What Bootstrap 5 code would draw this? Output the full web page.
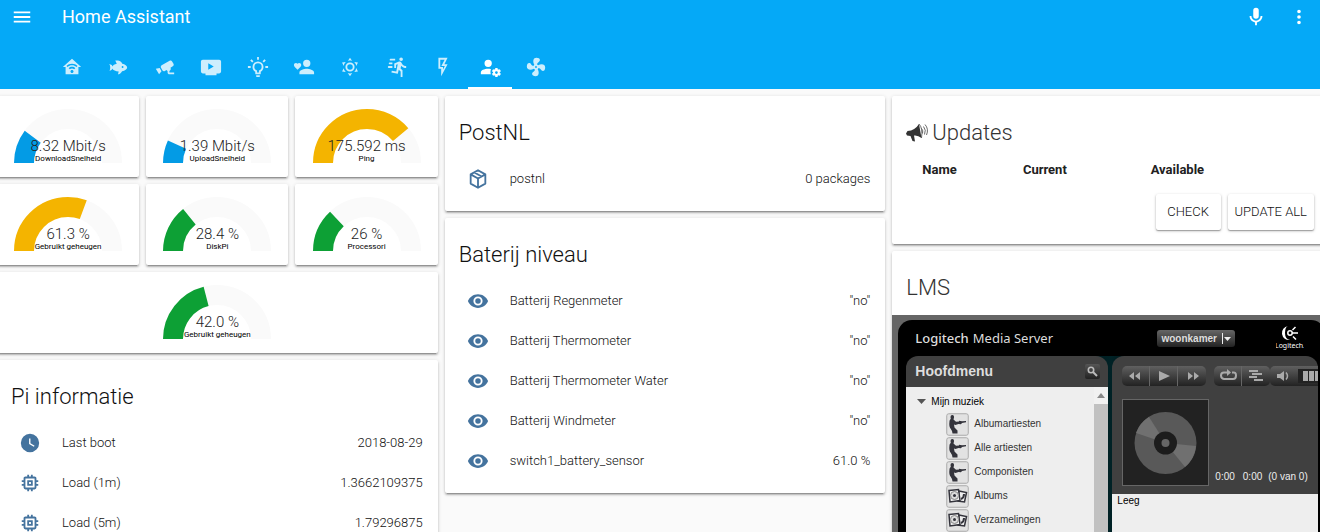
<!DOCTYPE html>
<html lang="nl">
<head>
<meta charset="utf-8">
<meta name="viewport" content="width=device-width, initial-scale=1">
<title>Home Assistant</title>
<link rel="stylesheet" href="https://cdn.jsdelivr.net/npm/bootstrap@5.3.0/dist/css/bootstrap.min.css">
<style>
  body { font-family: Roboto, "Noto Sans", sans-serif; font-size: 13px; line-height: 18px; font-weight: 300; color: #111; background: #fafafa; overflow: hidden; }
  svg { display: block; fill: currentColor; flex: none; }
  .ico { width: 22px; height: 22px; }
  .app-header { background: #05a9f7; color: #fff; }
  .toolbar { height: 34px; padding: 0 10px 0 11px; }
  .app-title { font-size: 18px; line-height: 24px; font-weight: 400; margin-left: 29px; }
  .icon-btn { background: none; border: 0; padding: 0; color: inherit; }
  .icon-btn + .icon-btn { margin-left: 21px; }
  .tabs { display: grid; grid-template-columns: repeat(11, 1fr); column-gap: 3px; width: 508px; margin: 11px 0 0 50px; }
  .tabs a { height: 44px; color: #cdeefd; display: flex; justify-content: center; align-items: center; padding-top: 2px; border-bottom: 2px solid transparent; }
  .tabs a.active { color: #fff; border-color: #fff; }
  .board { display: grid; grid-template-columns: repeat(3, minmax(0, 1fr)); gap: 7px; margin: 7px -13px 0 -3px; }
  .tile { background: #fff; border-radius: 2px; box-shadow: 0 2px 2px rgba(0,0,0,.2), 0 1px 4px rgba(0,0,0,.14), 0 3px 1px -2px rgba(0,0,0,.2); }
  .stack { display: flex; flex-direction: column; gap: 7px; }
  .gauges { display: grid; grid-template-columns: repeat(3, 1fr); gap: 7px; }
  .gauge { position: relative; padding: 13px 0 14px; }
  .gauge svg { margin: 0 auto; width: 108px; height: 54px; }
  .gauge path { fill: none; stroke-width: 20; }
  .gauge-text { position: absolute; left: 0; right: 0; top: 42px; text-align: center; }
  .gauge-value { font-size: 15px; line-height: 17px; color: #222; }
  .gauge-name { font-size: 8px; line-height: 8px; font-weight: 400; color: #000; }
  .tile-title { font-size: 22px; line-height: 29px; font-weight: 300; margin: 0; padding: 22px 14px 0; }
  .tile-title.soft { color: #333; }
  .rows { display: grid; gap: 4px; padding: 14px 15px; margin: 0; list-style: none; }
  .rows li { display: flex; align-items: center; height: 36px; }
  .rows .ico { margin: 0 21px 0 7px; color: #44739e; }
  .updates { margin-top: 14px; }
  .updates th { font-weight: 700; padding: 0 0 0 16px; color: #212121; }
  .updates th:first-child { padding-left: 30px; }
  .upd-actions { gap: 7px; padding: 15px 19px 14px; }
  .mdc { background: #fff; border: 0; height: 36px; border-radius: 2px; padding: 0 7px; color: #111; font-size: 13px; font-weight: 300; min-width: 65px; box-shadow: 0 1px 3px rgba(0,0,0,.25), 0 1px 1px rgba(0,0,0,.25); }

  .lms-frame { background: #666; padding: 5px 8px 0 6px; margin-top: 13px; height: 260px; font-family: "Liberation Sans", Arial, sans-serif; font-size: 10px; font-weight: 400; }
  .lms { background: linear-gradient(90deg, #000 30%, #002226 50%, #000 60%) 0 36px no-repeat #000; border-radius: 14px 14px 0 0; height: 100%; padding: 0 7px 0 8px; display: flex; flex-direction: column; }
  .lms-top { height: 36px; color: #ddd; padding: 0 14px 0 9px; }
  .lms-brand { font-family: "Noto Sans", sans-serif; font-size: 13px; font-weight: 500; }
  .lms-sub { font-family: "Noto Sans", sans-serif; font-size: 13px; }
  .player-pick { height: 17px; padding: 0; border: 0; color: #ddd; font-weight: 700; font-size: 10px; line-height: 15px; border-radius: 3px; background: linear-gradient(#666, #222); }
  .player-pick svg { width: 14px; height: 15px; }
  .logi { width: 28px; height: 24px; margin-left: 41px; color: #fff; }
  .lms-body { flex: 1; display: grid; grid-template-columns: 202px 1fr; gap: 4px; }
  .pane { border-radius: 12px 12px 0 0; background: #404040; overflow: hidden; display: flex; flex-direction: column; min-width: 0; }
  .pane-head { height: 31px; padding: 0 8px 0 9px; }
  .pane-head h2 { font-size: 14px; font-weight: 700; margin: 0; color: #ddd; }
  .search-btn { width: 15px; height: 15px; border: 0; padding: 2px; background: linear-gradient(#555, #222); color: #bbb; border-radius: 2px; }
  .tree { background: #eee; flex: 1; display: flex; color: #222; }
  .tree ul { list-style: none; margin: 0; padding: 0 0 0 40px; }
  .tree li { height: 24px; display: flex; align-items: center; gap: 5px; color: #333; }
  .tree li svg { width: 23px; height: 23px; }
  .tree-root { height: 25px; padding: 4px 0 0 11px; color: #000; gap: 5px; }
  .tree-root svg { color: #555; }
  .bar { width: 14px; background: #c1c1c1; }
  .bar div { height: 17px; background: #f1f1f1; padding: 6px 3px; color: #888; }
  .controls { margin: 10px 0 0 10px; height: 20px; }
  .ctl { display: flex; flex: none; border-radius: 5px; overflow: hidden; background: linear-gradient(#606060, #222); color: #aaa; }
  .ctl button { border: 0; border-right: 1px solid #666; padding: 0; background: none; color: inherit; width: 28px; height: 20px; }
  .ctl button:last-of-type { border-right: 0; }
  .ctl svg { width: 28px; height: 20px; }
  .now { padding: 13px 0 8px 10px; color: #eee; }
  .now .time { margin-left: 6px; }
  .cover { width: 87px; height: 87px; }
  .queue { background: #eee; color: #000; flex: 1; padding: 0 5px; line-height: 13px; }
</style>
</head>
<body>
<svg width="0" height="0" class="position-absolute" aria-hidden="true">
  <symbol id="eye" viewBox="0 0 24 24"><path d="M12,9A3,3 0 0,0 9,12A3,3 0 0,0 12,15A3,3 0 0,0 15,12A3,3 0 0,0 12,9M12,17A5,5 0 0,1 7,12A5,5 0 0,1 12,7A5,5 0 0,1 17,12A5,5 0 0,1 12,17M12,4.5C7,4.5 2.73,7.61 1,12C2.73,16.39 7,19.5 12,19.5C17,19.5 21.27,16.39 23,12C21.27,7.61 17,4.5 12,4.5Z"/></symbol>
  <symbol id="chip" viewBox="0 0 24 24"><path d="M17,17H7V7H17M21,11V9H19V7C19,5.89 18.1,5 17,5H15V3H13V5H11V3H9V5H7C5.89,5 5,5.89 5,7V9H3V11H5V13H3V15H5V17A2,2 0 0,0 7,19H9V21H11V19H13V21H15V19H17A2,2 0 0,0 19,17V15H21V13H19V11M13,13H11V11H13M15,9H9V15H15V9Z"/></symbol>
  <symbol id="artist" viewBox="0 0 23 23"><rect x=".75" y=".75" width="21.5" height="21.5" rx="2" fill="#e2e2e2" stroke="#aaa"/><path fill="#33333b" d="M4.500 4Q4.500 1.800 6.500 2Q8.500 2.300 8 4.500L7.500 6.500L10 8.800L13 8.500V7.700L16 8.300L20 8V9.300L16 10L15 11.200L12.500 11L9.500 12L8 11.500L8.500 14.500L11.500 17.500V20.500H6.500Q6.500 18 4.500 15.500Q2.800 13.500 3.500 8Q3.700 6.500 4.800 6Z"/></symbol>
  <symbol id="album" viewBox="0 0 23 23"><rect x=".75" y=".75" width="21.500" height="21.500" rx="2" fill="#e2e2e2" stroke="#aaa"/><g stroke="#33333b" fill="#eee"><path stroke-width="1.500" d="M13 6L20.500 7.500L18.500 17L12 16Z"/><path stroke-width="1.500" d="M3 5.500L12.500 4.500L14 15.500L4 17Z"/><circle cx="8.500" cy="10.500" r="4" fill="#ddd" stroke="#888"/></g><circle cx="8.500" cy="10.500" r="1.500" fill="#33333b"/><path d="M15 14q3-1 3-5" stroke="#33333b" stroke-width="2" fill="none"/></symbol>
</svg>

<header class="app-header">
  <div class="toolbar d-flex align-items-center">
    <button class="icon-btn" aria-label="Menu"><svg class="ico" viewBox="0 0 24 24"><path d="M3,6H21V8H3V6M3,11H21V13H3V11M3,16H21V18H3V16Z"/></svg></button>
    <h1 class="app-title mb-0">Home Assistant</h1>
    <button class="icon-btn ms-auto" aria-label="Spraak"><svg class="ico" viewBox="0 0 24 24"><path d="M12,2A3,3 0 0,1 15,5V11A3,3 0 0,1 12,14A3,3 0 0,1 9,11V5A3,3 0 0,1 12,2M19,11C19,14.53 16.39,17.44 13,17.93V21H11V17.93C7.61,17.44 5,14.53 5,11H7A5,5 0 0,0 12,16A5,5 0 0,0 17,11H19Z"/></svg></button>
    <button class="icon-btn" aria-label="Meer"><svg class="ico" viewBox="0 0 24 24"><path d="M12,16A2,2 0 0,1 14,18A2,2 0 0,1 12,20A2,2 0 0,1 10,18A2,2 0 0,1 12,16M12,10A2,2 0 0,1 14,12A2,2 0 0,1 12,14A2,2 0 0,1 10,12A2,2 0 0,1 12,10M12,4A2,2 0 0,1 14,6A2,2 0 0,1 12,8A2,2 0 0,1 10,6A2,2 0 0,1 12,4Z"/></svg></button>
  </div>
  <nav class="tabs">
    <a href="#" aria-label="Huis"><svg class="ico" viewBox="0 0 24 24"><path d="M12,3L2,12H5V20H19V12H22L12,3M12,8.5C14.34,8.5 16.46,9.43 18,10.94L16.8,12.12C15.58,10.91 13.88,10.17 12,10.17C10.12,10.17 8.42,10.91 7.2,12.12L6,10.94C7.54,9.43 9.66,8.5 12,8.5M12,11.83C13.4,11.83 14.67,12.39 15.6,13.3L14.4,14.47C13.79,13.87 12.94,13.5 12,13.5C11.06,13.5 10.21,13.87 9.6,14.47L8.4,13.3C9.33,12.39 10.6,11.83 12,11.83M12,15.17C12.94,15.17 13.7,15.91 13.7,16.83C13.7,17.75 12.94,18.5 12,18.5C11.06,18.5 10.3,17.75 10.3,16.83C10.3,15.91 11.06,15.17 12,15.17Z"/></svg></a>
    <a href="#" aria-label="Vis"><svg class="ico" viewBox="0 0 24 24"><path d="M12,20L12.76,17C9.5,16.79 6.59,15.4 5.75,13.58C5.66,14.06 5.53,14.5 5.33,14.83C4.67,16 3.33,16 2,16C3.1,16 3.5,14.43 3.5,12.5C3.5,10.57 3.1,9 2,9C3.33,9 4.67,9 5.33,10.17C5.53,10.5 5.66,10.94 5.75,11.42C6.4,10 8.32,8.85 10.66,8.32L9,5C11,5 13,5 14.33,5.67C15.46,6.23 16.11,7.27 16.69,8.38C19.61,9.08 22,10.66 22,12.5C22,14.38 19.5,16 16.5,16.66C15.67,17.76 14.86,18.78 14.17,19.33C13.33,20 12.67,20 12,20M17,11A1,1 0 0,0 16,12A1,1 0 0,0 17,13A1,1 0 0,0 18,12A1,1 0 0,0 17,11Z"/></svg></a>
    <a href="#" aria-label="Camera"><svg class="ico" viewBox="0 0 24 24"><path d="M18.15,4.94C17.77,4.91 17.37,5 17,5.2L8.35,10.2C7.39,10.76 7.07,12 7.62,12.94L9.12,15.53C9.67,16.5 10.89,16.82 11.85,16.27L13.65,15.23C13.92,15.69 14.32,16.06 14.81,16.27V18.04C14.81,19.13 15.7,20 16.81,20H22V18.04H16.81V16.27C17.72,15.87 18.31,14.97 18.31,14C18.31,13.54 18.19,13.11 17.97,12.73L20.5,11.27C21.47,10.71 21.8,9.5 21.24,8.53L19.74,5.94C19.4,5.34 18.79,5 18.15,4.94M6.22,13.17L2,13.87L2.75,15.17L4.75,18.63L5.5,19.93L8.22,16.63L6.22,13.17Z"/></svg></a>
    <a href="#" aria-label="Media"><svg class="ico" viewBox="0 0 24 24"><path d="M3,4H21A2,2 0 0,1 23,6V17A2,2 0 0,1 21,19H18V21H6V19H3A2,2 0 0,1 1,17V6A2,2 0 0,1 3,4M9,8V15L15,11.5Z"/></svg></a>
    <a href="#" aria-label="Licht"><svg class="ico" viewBox="0 0 24 24"><path d="M20,11H23V13H20V11M1,11H4V13H1V11M13,1V4H11V1H13M4.92,3.5L7.05,5.64L5.63,7.05L3.5,4.93L4.92,3.5M16.95,5.63L19.07,3.5L20.5,4.93L18.37,7.05L16.95,5.63M12,6A6,6 0 0,1 18,12C18,14.22 16.79,16.16 15,17.2V19A1,1 0 0,1 14,20H10A1,1 0 0,1 9,19V17.2C7.21,16.16 6,14.22 6,12A6,6 0 0,1 12,6M14,21V22A1,1 0 0,1 13,23H11A1,1 0 0,1 10,22V21H14M11,18H13V15.87C14.73,15.43 16,13.86 16,12A4,4 0 0,0 12,8A4,4 0 0,0 8,12C8,13.86 9.27,15.43 11,15.87V18Z"/></svg></a>
    <a href="#" aria-label="Personen"><svg class="ico" viewBox="0 0 24 24"><path d="M15,14C12.3,14 7,15.3 7,18V20H23V18C23,15.3 17.7,14 15,14M15,12A4,4 0 0,0 19,8A4,4 0 0,0 15,4A4,4 0 0,0 11,8A4,4 0 0,0 15,12M5,15L4.4,14.5C2.4,12.6 1,11.4 1,9.9C1,8.7 2,7.7 3.2,7.7C3.9,7.7 4.6,8 5,8.5C5.4,8 6.1,7.7 6.8,7.7C8,7.7 9,8.6 9,9.9C9,11.4 7.6,12.6 5.6,14.5L5,15Z"/></svg></a>
    <a href="#" aria-label="Weer"><svg class="ico" viewBox="0 0 24 24"><path d="M12,7A5,5 0 0,1 17,12A5,5 0 0,1 12,17A5,5 0 0,1 7,12A5,5 0 0,1 12,7M12,9A3,3 0 0,0 9,12A3,3 0 0,0 12,15A3,3 0 0,0 15,12A3,3 0 0,0 12,9M12,2L14.39,5.42C13.65,5.15 12.84,5 12,5C11.16,5 10.35,5.15 9.61,5.42L12,2M3.34,7L7.5,6.65C6.9,7.16 6.36,7.78 5.94,8.5C5.5,9.24 5.25,10 5.11,10.79L3.34,7M3.36,17L5.12,13.23C5.26,14 5.53,14.78 5.95,15.5C6.37,16.24 6.91,16.86 7.5,17.37L3.36,17M20.65,7L18.88,10.79C18.74,10 18.47,9.23 18.05,8.5C17.63,7.78 17.1,7.15 16.5,6.64L20.65,7M20.64,17L16.5,17.36C17.09,16.85 17.62,16.22 18.04,15.5C18.46,14.77 18.73,14 18.87,13.21L20.64,17M12,22L9.59,18.56C10.33,18.83 11.14,19 12,19C12.82,19 13.63,18.83 14.37,18.56L12,22Z"/></svg></a>
    <a href="#" aria-label="Beweging"><svg class="ico" viewBox="0 0 24 24"><path d="M16.5,5.5A2,2 0 0,0 18.5,3.5A2,2 0 0,0 16.5,1.5A2,2 0 0,0 14.5,3.5A2,2 0 0,0 16.5,5.5M12.9,19.4L13.9,15L16,17V23H18V15.5L15.9,13.5L16.5,10.5C17.89,12.09 19.89,13 22,13V11C20.24,11.03 18.6,10.11 17.7,8.6L16.7,7C16.34,6.4 15.7,6 15,6C14.7,6 14.5,6.1 14.2,6.1L9,8.3V13H11V9.6L12.8,8.9L11.2,17L6.3,16L5.9,18L12.9,19.4M4,9A1,1 0 0,1 3,8A1,1 0 0,1 4,7H7V9H4M5,5A1,1 0 0,1 4,4A1,1 0 0,1 5,3H10V5H5M3,13A1,1 0 0,1 2,12A1,1 0 0,1 3,11H7V13H3Z"/></svg></a>
    <a href="#" aria-label="Energie"><svg class="ico" viewBox="0 0 24 24"><path d="M7,2H17L13.5,9H17L10,22V14H7V2M9,4V12H12V14.66L14,11H10.24L13.76,4H9Z"/></svg></a>
    <a href="#" class="active" aria-label="Systeem" aria-current="page"><svg class="ico" viewBox="0 0 24 24"><path d="M10,4A4,4 0 0,1 14,8A4,4 0 0,1 10,12A4,4 0 0,1 6,8A4,4 0 0,1 10,4M10,14C11,14 12,14.100 13.100,14.400Q12.500,15.800 12.500,17.500Q12.500,18.900 13,20H2V18C2,15.790 5.580,14 10,14Z"/><circle cx="19" cy="18" r="2.600" fill="none" stroke="currentColor" stroke-width="2.200"/><path fill="none" stroke="currentColor" stroke-width="2.600" d="M19 13v2M19 21v2M14.700 15.500l1.700 1M21.600 19.500l1.700 1M14.700 20.500l1.700-1M21.600 16.500l1.700-1"/></svg></a>
    <a href="#" aria-label="Ventilatie"><svg class="ico" viewBox="0 0 24 24"><path d="M12,11A1,1 0 0,0 11,12A1,1 0 0,0 12,13A1,1 0 0,0 13,12A1,1 0 0,0 12,11M12.5,2C17,2 17.11,5.57 14.75,6.75C13.76,7.24 13.32,8.29 13.13,9.22C13.61,9.42 14.03,9.73 14.35,10.13C18.05,8.13 22.03,8.92 22.03,12.5C22.03,17 18.46,17.1 17.28,14.73C16.78,13.74 15.72,13.3 14.79,13.11C14.59,13.59 14.28,14 13.88,14.34C15.87,18.03 15.08,22 11.5,22C7,22 6.91,18.42 9.27,17.24C10.25,16.75 10.69,15.71 10.89,14.79C10.4,14.59 9.97,14.27 9.65,13.87C5.96,15.85 2,15.07 2,11.5C2,7 5.56,6.89 6.74,9.26C7.24,10.25 8.29,10.68 9.22,10.87C9.41,10.39 9.73,9.97 10.14,9.65C8.15,5.96 8.94,2 12.5,2Z"/></svg></a>
  </nav>
</header>

<main class="board">
  <div class="stack">
    <div class="gauges">
      <div class="tile gauge"><svg viewBox="0 0 108 54"><path d="M10 54A44 44 0 0 1 98 54" stroke="#fafafa"/><path d="M10 54A44 44 0 0 1 98 54" stroke="#039be5" pathLength="100" stroke-dasharray="20.400 200"/></svg><div class="gauge-text"><div class="gauge-value">8.32 Mbit/s</div><div class="gauge-name">DownloadSnelheid</div></div></div>
      <div class="tile gauge"><svg viewBox="0 0 108 54"><path d="M10 54A44 44 0 0 1 98 54" stroke="#fafafa"/><path d="M10 54A44 44 0 0 1 98 54" stroke="#039be5" pathLength="100" stroke-dasharray="13.700 200"/></svg><div class="gauge-text"><div class="gauge-value">1.39 Mbit/s</div><div class="gauge-name">UploadSnelheid</div></div></div>
      <div class="tile gauge"><svg viewBox="0 0 108 54"><path d="M10 54A44 44 0 0 1 98 54" stroke="#fafafa"/><path d="M10 54A44 44 0 0 1 98 54" stroke="#f4b400" pathLength="100" stroke-dasharray="77.700 200"/></svg><div class="gauge-text"><div class="gauge-value">175.592 ms</div><div class="gauge-name">Ping</div></div></div>
      <div class="tile gauge"><svg viewBox="0 0 108 54"><path d="M10 54A44 44 0 0 1 98 54" stroke="#fafafa"/><path d="M10 54A44 44 0 0 1 98 54" stroke="#f4b400" pathLength="100" stroke-dasharray="61.300 200"/></svg><div class="gauge-text"><div class="gauge-value">61.3 %</div><div class="gauge-name">Gebruikt geheugen</div></div></div>
      <div class="tile gauge"><svg viewBox="0 0 108 54"><path d="M10 54A44 44 0 0 1 98 54" stroke="#fafafa"/><path d="M10 54A44 44 0 0 1 98 54" stroke="#0da035" pathLength="100" stroke-dasharray="28.400 200"/></svg><div class="gauge-text"><div class="gauge-value">28.4 %</div><div class="gauge-name">DiskPi</div></div></div>
      <div class="tile gauge"><svg viewBox="0 0 108 54"><path d="M10 54A44 44 0 0 1 98 54" stroke="#fafafa"/><path d="M10 54A44 44 0 0 1 98 54" stroke="#0da035" pathLength="100" stroke-dasharray="26 200"/></svg><div class="gauge-text"><div class="gauge-value">26 %</div><div class="gauge-name">Processori</div></div></div>
    </div>
    <div class="tile gauge"><svg viewBox="0 0 108 54"><path d="M10 54A44 44 0 0 1 98 54" stroke="#fafafa"/><path d="M10 54A44 44 0 0 1 98 54" stroke="#0da035" pathLength="100" stroke-dasharray="42 200"/></svg><div class="gauge-text"><div class="gauge-value">42.0 %</div><div class="gauge-name">Gebruikt geheugen</div></div></div>
    <section class="tile">
      <h2 class="tile-title">Pi informatie</h2>
      <ul class="rows">
        <li><svg class="ico" viewBox="0 0 24 24"><path d="M12,2A10,10 0 0,0 2,12A10,10 0 0,0 12,22A10,10 0 0,0 22,12A10,10 0 0,0 12,2M16.2,16.2L11,13V7H12.5V12.2L17,14.9L16.2,16.2Z"/></svg><span>Last boot</span><span class="ms-auto">2018-08-29</span></li>
        <li><svg class="ico"><use href="#chip"/></svg><span>Load (1m)</span><span class="ms-auto">1.3662109375</span></li>
        <li><svg class="ico"><use href="#chip"/></svg><span>Load (5m)</span><span class="ms-auto">1.79296875</span></li>
      </ul>
    </section>
  </div>

  <div class="stack">
    <section class="tile">
      <h2 class="tile-title">PostNL</h2>
      <ul class="rows">
        <li><svg class="ico" viewBox="0 0 24 24"><path fill="none" stroke="currentColor" stroke-width="2" stroke-linejoin="round" d="M12 2.500L20 7V17L12 21.500L4 17V7ZM4 7L12 11.500L20 7M12 11.500V21.500M8 4.900L16 9.300"/></svg><span>postnl</span><span class="ms-auto">0 packages</span></li>
      </ul>
    </section>
    <section class="tile">
      <h2 class="tile-title">Baterij niveau</h2>
      <ul class="rows">
        <li><svg class="ico"><use href="#eye"/></svg><span>Batterij Regenmeter</span><span class="ms-auto">"no"</span></li>
        <li><svg class="ico"><use href="#eye"/></svg><span>Batterij Thermometer</span><span class="ms-auto">"no"</span></li>
        <li><svg class="ico"><use href="#eye"/></svg><span>Batterij Thermometer Water</span><span class="ms-auto">"no"</span></li>
        <li><svg class="ico"><use href="#eye"/></svg><span>Batterij Windmeter</span><span class="ms-auto">"no"</span></li>
        <li><svg class="ico"><use href="#eye"/></svg><span>switch1_battery_sensor</span><span class="ms-auto">61.0 %</span></li>
      </ul>
    </section>
  </div>

  <div class="stack">
    <section class="tile">
      <h2 class="tile-title soft d-flex align-items-center"><svg width="22" height="20" viewBox="0 0 22 20" class="me-1"><path fill="#333" d="M0 10.500L1.500 8Q9 7.500 13 1L15.500 15Q12 12 8 12.500L9 18.500L6.500 18L4.500 13L1 12.500Z"/><path fill="none" stroke="#444" stroke-width=".8" d="M13 1Q17 5 15.500 15M15.500 5.500Q17.500 7.500 16.500 10.500M17.500 3.500Q20.500 7 18.500 11.500M19 1.500Q23 6 20.500 12"/></svg><span>Updates</span></h2>
      <table class="updates w-100">
        <colgroup><col style="width:26%"><col style="width:29%"><col></colgroup>
        <thead><tr><th scope="col">Name</th><th scope="col">Current</th><th scope="col">Available</th></tr></thead>
      </table>
      <div class="d-flex justify-content-end upd-actions"><button class="mdc">CHECK</button><button class="mdc">UPDATE ALL</button></div>
    </section>
    <section class="tile">
      <h2 class="tile-title soft">LMS</h2>
      <div class="lms-frame">
        <div class="lms">
          <div class="lms-top d-flex align-items-center">
            <span class="lms-brand">Logitech</span><span class="lms-sub ms-1">Media Server</span>
            <button class="player-pick ms-auto d-flex align-items-center"><span class="ps-1">woonkamer</span><svg viewBox="0 0 14 15" class="ms-1"><path d="M1 2h1v11H1zM3 6h7L6.500 10z" fill="#eee"/></svg></button>
            <svg class="logi" viewBox="0 0 28 24" role="img" aria-label="Logitech"><path d="M12 0A7 7 0 1 0 14 14Q9 13 9 7T12 0Z"/><circle cx="14" cy="7" r="2.200" fill="none" stroke="#fff" stroke-width="1.500"/><path d="M16 7h6M16.500 4l3-3M17 10.500l3 3" stroke="#fff" stroke-width="1.500"/><text x="14" y="22" text-anchor="middle" font-family="Noto Sans, sans-serif" font-size="7">Logitech.</text></svg>
          </div>
          <div class="lms-body">
            <div class="pane">
              <div class="pane-head d-flex align-items-center justify-content-between"><h2>Hoofdmenu</h2><button class="search-btn" aria-label="Zoeken"><svg width="11" height="11" viewBox="0 0 11 11"><circle cx="4" cy="4" r="2.700" fill="none" stroke="currentColor" stroke-width="1.600"/><path d="M6 6l4 4" stroke="currentColor" stroke-width="2"/></svg></button></div>
              <div class="tree">
                <div class="flex-grow-1">
                  <div class="tree-root d-flex align-items-center"><svg width="9" height="6" viewBox="0 0 9 6"><path d="M0 0H9L4.500 5Z"/></svg>Mijn muziek</div>
                  <ul>
                    <li><svg><use href="#artist"/></svg>Albumartiesten</li>
                    <li><svg><use href="#artist"/></svg>Alle artiesten</li>
                    <li><svg><use href="#artist"/></svg>Componisten</li>
                    <li><svg><use href="#album"/></svg>Albums</li>
                    <li><svg><use href="#album"/></svg>Verzamelingen</li>
                  </ul>
                </div>
                <div class="bar"><div><svg width="8" height="5" viewBox="0 0 8 5"><path d="M0 5L4 0L8 5Z"/></svg></div></div>
              </div>
            </div>
            <div class="pane">
              <div class="controls d-flex">
                <div class="ctl me-2">
                  <button aria-label="Vorige"><svg viewBox="0 0 28 20"><path d="M12 6v8l-5-4zM18 6v8l-5-4z"/></svg></button>
                  <button aria-label="Afspelen"><svg viewBox="0 0 28 20"><path d="M9 5L20 10L9 15Z"/></svg></button>
                  <button aria-label="Volgende"><svg viewBox="0 0 28 20"><path d="M10 6v8l5-4zM16 6v8l5-4z"/></svg></button>
                </div>
                <div class="ctl">
                  <button aria-label="Herhalen"><svg viewBox="0 0 28 20"><path d="M14 6.500H10Q7 6.500 7 9.500T10 13H19Q22 13 22 9.500T19 6.500H18" fill="none" stroke="currentColor" stroke-width="2"/><path d="M13 3v7l4-3.500z"/></svg></button>
                  <button aria-label="Willekeurig"><svg viewBox="0 0 28 20"><path d="M7 4h9v2H7zM10 7h10v2H10zM7 10h8v2H7zM12 13h9v2h-9z"/></svg></button>
                </div>
                <div class="ctl">
                  <button aria-label="Volume"><svg viewBox="0 0 28 20"><path d="M7 8h3l4-3v10l-4-3H7z"/><path d="M16 6.500q3 3.500 0 7" fill="none" stroke="currentColor" stroke-width="1.500"/></svg></button>
                  <svg viewBox="0 0 28 20"><path fill="#222" d="M0 3h28v14H0z"/><path d="M5 5h5v10H5zM11 5h5v10h-5zM17 5h5v10h-5z"/></svg>
                </div>
              </div>
              <div class="now d-flex align-items-end">
                <svg class="cover" viewBox="0 0 87 87"><rect x=".5" y=".5" width="86" height="86" fill="#222" stroke="#666"/><circle cx="43.500" cy="44" r="31" fill="#595959"/><path d="M43.500 44L14 34A31 31 0 0 1 27 18Z" fill="#707070"/><path d="M43.500 44L74 47A31 31 0 0 1 63 68Z" fill="#707070"/><circle cx="43.500" cy="44" r="11.500" fill="#1c1c1c"/><circle cx="43.500" cy="44" r="4" fill="#666"/></svg>
                <span class="time">0:00</span><span class="ms-2">0:00</span><span class="time">(0 van 0)</span>
              </div>
              <div class="queue">Leeg</div>
            </div>
          </div>
        </div>
      </div>
    </section>
  </div>
</main>
<script src="https://cdn.jsdelivr.net/npm/bootstrap@5.3.0/dist/js/bootstrap.bundle.min.js"></script>
</body>
</html>
